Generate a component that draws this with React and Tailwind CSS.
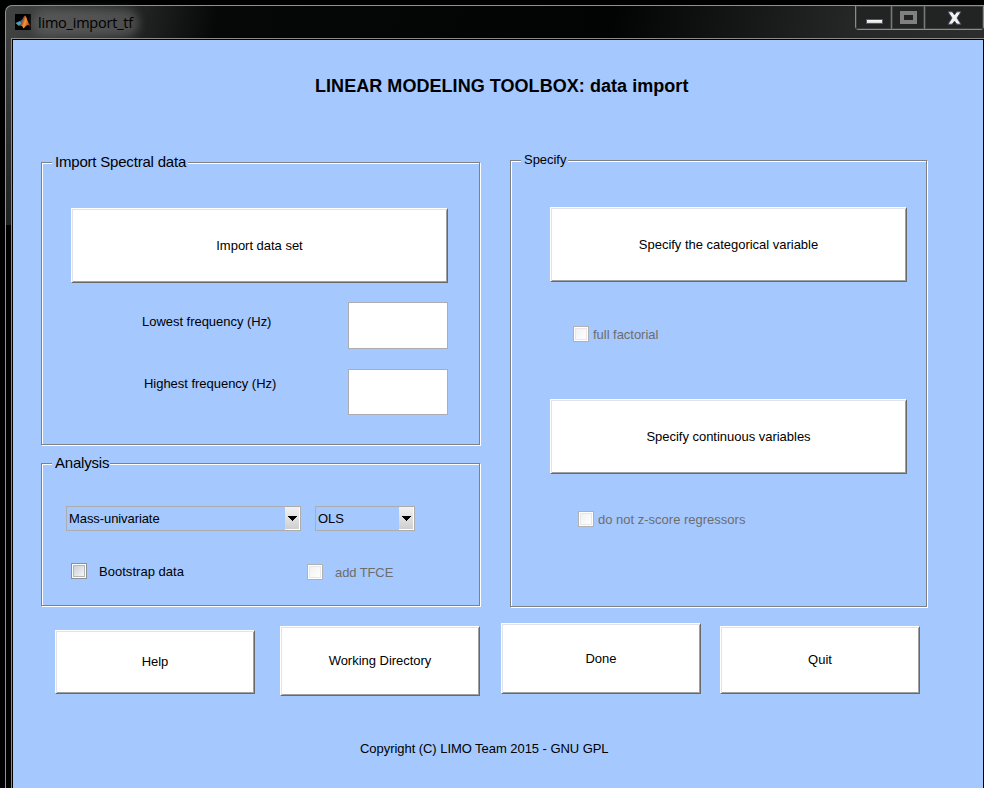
import React from "react";

function GroupBox({ title, className, titleClass, children }) {
  return (
    <section
      className={`flex flex-col items-start border border-[#808080] shadow-[1px_1px_0_#fff,inset_1px_1px_0_#fff] ${className}`}
    >
      <h2 className={`bg-[#a5c8ff] whitespace-nowrap ${titleClass}`}>{title}</h2>
      {children}
    </section>
  );
}

function PushButton({ className, children }) {
  return (
    <button
      className={`flex shrink-0 items-center justify-center whitespace-nowrap border border-t-white border-l-white border-r-[#696969] border-b-[#696969] bg-white tracking-[-0.02px] shadow-[inset_1px_1px_0_#e3e3e3,inset_-1px_-1px_0_#a0a0a0] ${className}`}
    >
      {children}
    </button>
  );
}

function Check({ label, disabled, className, gap }) {
  return (
    <label
      className={`flex h-4 items-center whitespace-nowrap ${gap} ${disabled ? "text-[#6d6d6d]" : "text-black"} ${className}`}
    >
      <span
        className={`flex h-4 w-4 shrink-0 border bg-white p-px ${disabled ? "border-[#b1b1b1]" : "border-[#8e8f8f]"}`}
      >
        <span
          className={`h-3 w-3 border bg-linear-to-br ${disabled ? "border-[#e6e8ea] from-[#f0f1f2] to-white" : "border-[#b4b8be] from-[#cbcfd5] to-[#f6f6f6]"}`}
        />
      </span>
      <span>{label}</span>
    </label>
  );
}

function Combo({ value, className }) {
  return (
    <div className={`flex h-[25px] border border-[#adadad] ${className}`}>
      <span className="flex-1 pl-[2px] leading-[23px] tracking-[-0.08px] whitespace-nowrap">{value}</span>
      <span className="flex w-[15px] items-center justify-center border-r border-b border-white bg-linear-to-b from-[#f2f2f2] to-[#cfcfcf]">
        <svg width="9" height="5" viewBox="0 0 9 5" shapeRendering="crispEdges">
          <path d="M0 0h9L4.5 5z" />
        </svg>
      </span>
    </div>
  );
}

function MatlabIcon() {
  return (
    <svg width="16" height="16" viewBox="0 0 16 16" className="shrink-0">
      <defs>
        <linearGradient id="peak" x1="0" x2="1" y1="0" y2="0.4">
          <stop offset="0" stopColor="#7a1d12" />
          <stop offset="0.4" stopColor="#b8401a" />
          <stop offset="0.62" stopColor="#f59a3c" />
          <stop offset="1" stopColor="#c2410f" />
        </linearGradient>
      </defs>
      <rect width="16" height="16" fill="#000" />
      <path d="M0.5 9L5 7l2 2-3 3z" fill="#4f9fb8" />
      <path d="M5 7c2-.5 3-3 4.500-5.500L8 10l-2 1-1.500.500L6.500 9z" fill="#3b6d86" />
      <path
        d="M4 12l2-1.500C8 8 8.500 2 10 1.500c1.500.500 2.500 7 5.500 10.500-2-1.500-3-1.500-4.500 0L8.500 14.500C7.500 12 6.500 11.500 4 12z"
        fill="url(#peak)"
      />
    </svg>
  );
}

function TitleBar() {
  return (
    <header className="flex h-8 justify-between">
      <div className="flex items-start pt-2 pl-[9px]">
        <MatlabIcon />
        <span className="mt-px ml-[7px] rounded-full bg-[#666]/60 font-['Open_Sans',sans-serif] text-[14.5px] leading-[16px] tracking-[-0.22px] whitespace-nowrap text-black shadow-[0_0_8px_6px_rgba(102,102,102,0.6)]">
          limo_import_tf
        </span>
      </div>
      <div className="flex h-[24px] w-[129px] rounded-b-[4px] border border-t-0 border-[#8a8c8b] bg-[#222423] [&>span]:flex [&>span]:items-center [&>span]:justify-center [&>span]:shadow-[inset_0_0_0_1px_#3c3e3d]">
        <span className="w-[36px] border-r border-[#777]">
          <i className="mt-2 ml-px h-[5px] w-[17px] border border-[#55556a] bg-linear-to-b from-white to-[#d5d5d5]" />
        </span>
        <span className="w-[33px] border-r border-[#777]">
          <i className="h-[13px] w-[17px] border-4 border-[#808080] bg-[#222]" />
        </span>
        <span className="flex-1">
          <svg width="15" height="14" viewBox="0 0 15 14" className="ml-px">
            <path
              d="M1 .8h4.200l2.300 3 2.300-3H14L10 7l4 6.200H9.800l-2.300-3-2.300 3H1L5 7z"
              fill="#f2f2f2"
              stroke="#4a4a60"
              strokeWidth="1"
            />
          </svg>
        </span>
      </div>
    </header>
  );
}

export default function App() {
  return (
    <div className="h-[788px] w-[984px] overflow-hidden bg-black pt-[5px] pl-[5px] font-['Liberation_Sans',Arial,sans-serif] text-[13px] leading-[15px] tracking-[-0.03px] text-black">
      <div className="flex h-[783px] flex-col rounded-tl-[7px] border-t border-l border-[#8f9190] bg-[linear-gradient(100deg,#414342_0px,#333534_90px,#060707_210px,#020303_600px,#262827_840px,#2c2e2d_979px)]">
        <TitleBar />
        <div className="flex flex-1">
          <div className="w-[5px] bg-linear-to-b from-[#3e4040] from-0% via-[#202222] via-25% to-black to-25%" />
          <main className="flex flex-1 flex-col border-t border-l border-[#8c8a85]">
            <div className="flex flex-1 flex-col border-t border-r border-l border-black bg-[#a5c8ff]">
              <h1 className="mt-[36px] ml-[302px] h-[21px] text-[18px] leading-[21px] font-bold tracking-[0.05px] whitespace-nowrap">
                LINEAR MODELING TOOLBOX: data import
              </h1>
              <div className="mt-[63px] flex items-start pl-[28px]">
                <div className="mt-[2px] flex flex-col gap-[18px]">
                  <GroupBox
                    title="Import Spectral data"
                    className="h-[283px] w-[439px]"
                    titleClass="mt-[-10px] ml-[10px] h-[18px] w-[136px] pl-[3px] text-[15px] leading-[18px] tracking-[-0.2px]"
                  >
                    <PushButton className="mt-[37px] ml-[29px] h-[75px] w-[377px]">Import data set</PushButton>
                    <div className="mt-[19px] ml-[100px] flex w-[306px] justify-between">
                      <span className="mt-[12px]">Lowest frequency (Hz)</span>
                      <span className="h-[47px] w-[100px] border border-[#abadb3] bg-white" />
                    </div>
                    <div className="mt-[20px] ml-[102px] flex w-[304px] justify-between">
                      <span className="mt-[7px]">Highest frequency (Hz)</span>
                      <span className="h-[46px] w-[100px] border border-[#abadb3] bg-white" />
                    </div>
                  </GroupBox>
                  <GroupBox
                    title="Analysis"
                    className="h-[143px] w-[439px]"
                    titleClass="mt-[-10px] ml-[10px] h-[18px] w-[58px] pl-[3px] text-[15px] leading-[18px] tracking-[-0.2px]"
                  >
                    <div className="mt-[34px] ml-[24px] flex gap-[14px]">
                      <Combo value="Mass-univariate" className="w-[235px]" />
                      <Combo value="OLS" className="w-[100px]" />
                    </div>
                    <div className="mt-[32px] ml-[29px] flex">
                      <Check label="Bootstrap data" gap="gap-[12px]" className="w-[236px] tracking-[0.03px]" />
                      <Check label="add TFCE" disabled gap="gap-[12px]" className="mt-px tracking-[-0.1px]" />
                    </div>
                  </GroupBox>
                </div>
                <GroupBox
                  title="Specify"
                  className="ml-[30px] h-[447px] w-[417px]"
                  titleClass="mt-[-9px] ml-[10px] h-[16px] w-[47px] pl-[3px] leading-[16px]"
                >
                  <PushButton className="mt-[39px] ml-[39px] h-[75px] w-[357px]">
                    Specify the categorical variable
                  </PushButton>
                  <Check label="full factorial" disabled gap="gap-[4px]" className="mt-[44px] ml-[62px]" />
                  <PushButton className="mt-[57px] ml-[39px] h-[75px] w-[357px]">Specify continuous variables</PushButton>
                  <Check
                    label="do not z-score regressors"
                    disabled
                    gap="gap-[4px]"
                    className="mt-[37px] ml-[67px] tracking-[0px]"
                  />
                </GroupBox>
              </div>
              <div className="mt-[16px] flex h-[73px] items-start pl-[42px]">
                <PushButton className="mt-[7px] h-[64px] w-[200px] pb-[2px]">Help</PushButton>
                <PushButton className="mt-[3px] ml-[25px] h-[70px] w-[200px] pb-[2px]">Working Directory</PushButton>
                <PushButton className="ml-[21px] h-[71px] w-[200px]">Done</PushButton>
                <PushButton className="mt-[3px] ml-[19px] h-[68px] w-[200px] pb-[2px]">Quit</PushButton>
              </div>
              <footer className="mt-[45px] ml-[347px] tracking-[-0.05px] whitespace-nowrap">
                Copyright (C) LIMO Team 2015 - GNU GPL
              </footer>
            </div>
          </main>
        </div>
      </div>
    </div>
  );
}
